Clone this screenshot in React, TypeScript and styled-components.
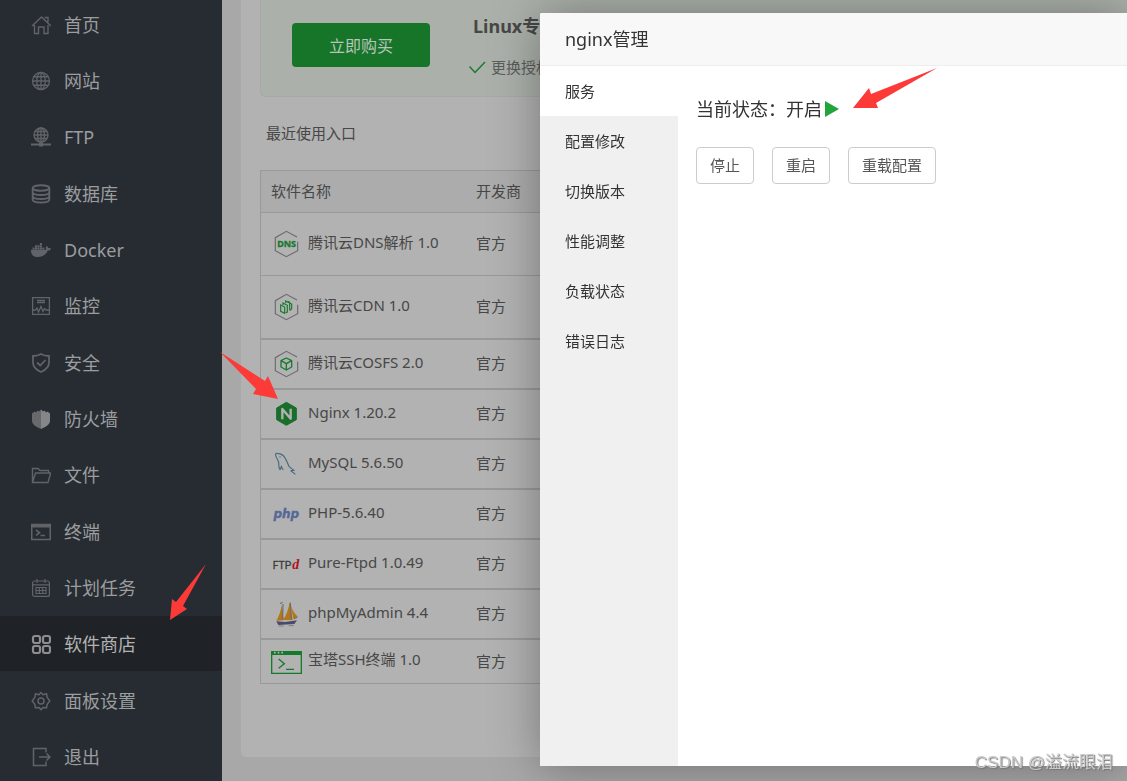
import React from 'react';
import styled, { createGlobalStyle, css } from 'styled-components';
import { FaDocker } from 'react-icons/fa';

const GlobalStyle = createGlobalStyle`
  *, *::before, *::after { box-sizing: border-box; }
  body {
    margin: 0;
    background: #a8a8a8;
    color: #474747;
    font: 15px/24px "Noto Sans", "Noto Sans CJK SC", sans-serif;
  }
  button { font: inherit; }
  ul { list-style: none; margin: 0; padding: 0; }
`;

const Page = styled.div`
  display: flex;
  min-height: 100vh;
  height: 100vh;
  overflow: hidden;
`;

const Sidebar = styled.nav`
  flex: none;
  width: 222px;
  overflow: hidden;
  background: #272c32;
`;

const Menu = styled.ul`
  margin-top: -3px;
`;

const MenuItem = styled.li`
  height: 55px;
  margin-bottom: 1px;
  &:nth-child(3n) { margin-bottom: 2px; }
`;

const MenuLink = styled.a<{ $active?: boolean }>`
  display: flex;
  align-items: center;
  gap: 13px;
  height: 100%;
  padding-left: 31px;
  font-size: 18px;
  text-decoration: none;
  color: ${(p) => (p.$active ? '#b2b2b2' : '#9b9d9f')};
  background: ${(p) => (p.$active ? '#1f2327' : 'transparent')};
  svg { color: ${(p) => (p.$active ? '#8c8e90' : '#606367')}; }
`;

const Main = styled.main`
  flex: 1;
  min-width: 960px;
  padding: 0 19px 24px;
`;

const Card = styled.section`
  height: 100%;
  padding: 0 19px;
  border-radius: 0 0 5px 5px;
  background: #b2b2b2;
`;

const Promo = styled.div`
  display: flex;
  gap: 39px;
  height: 97px;
  padding: 0 31px;
  border: 1px solid #a2aba7;
  border-top: 0;
  border-radius: 0 0 6px 6px;
  background: #abb1aa;
`;

const BuyButton = styled.button`
  width: 138px;
  height: 44px;
  margin-top: 23px;
  padding: 2px 0 0;
  border: 0;
  border-radius: 4px;
  background: #167529;
  color: #b9c4ba;
  font-size: 16px;
`;

const Plan = styled.div`
  padding-top: 14px;
  white-space: nowrap;
`;

const PlanTitle = styled.h2`
  margin: 0 0 17px;
  padding-left: 4px;
  font-size: 18px;
  line-height: 24px;
  font-weight: 700;
`;

const PlanFeature = styled.p`
  display: flex;
  align-items: center;
  gap: 5px;
  margin: 0;
  color: #5b5d5b;
`;

const Recent = styled.h3`
  margin: 24px 0 25px;
  padding-left: 6px;
  font-size: 15px;
  line-height: 24px;
  font-weight: 400;
`;

const Table = styled.table`
  width: 100%;
  table-layout: fixed;
  border: 1px solid #999;
  border-width: 1px 1px 0;
  border-spacing: 0;
  th, td { padding: 0 10px; text-align: left; font-weight: 400; border-bottom: 1px solid #999; }
  th { height: 42px; background: #acacac; }
  th, td:last-child { padding-bottom: 2px; }
  th:first-child { width: 205px; }
`;

const Row = styled.tr<{ $height: number; $thick?: boolean }>`
  td {
    height: ${(p) => p.$height}px;
    ${(p) => p.$thick && css`border-bottom-width: 2px;`}
  }
`;

const Software = styled.div`
  display: flex;
  align-items: center;
  gap: 6px;
  white-space: nowrap;
  svg { flex: none; }
`;

const SoftwareName = styled.span`
  padding-bottom: 5px;
`;

const Dialog = styled.section`
  position: fixed;
  top: 13px;
  right: 0;
  bottom: 15px;
  left: 540px;
  display: flex;
  flex-direction: column;
  border-radius: 2px 0 0 2px;
  background: #fff;
  color: #333;
  box-shadow: 1px 1px 50px rgba(0, 0, 0, 0.35);
`;

const DialogTitle = styled.h1`
  flex: none;
  height: 53px;
  margin: 0;
  padding-left: 25px;
  border-bottom: 1px solid #eee;
  border-radius: 2px 0 0 0;
  background: #f8f8f8;
  font-size: 18px;
  line-height: 52px;
  font-weight: 400;
`;

const DialogBody = styled.div`
  display: flex;
  flex: 1;
`;

const Tabs = styled.div`
  display: flex;
  flex-direction: column;
  flex: none;
  width: 138px;
  background: #f0f0f0;
`;

const Tab = styled.button<{ $active?: boolean }>`
  height: 50px;
  padding: 0 25px;
  border: 0;
  text-align: left;
  color: #333;
  background: ${(p) => (p.$active ? '#fff' : 'transparent')};
`;

const Panel = styled.div`
  flex: 1;
  padding: 29px 18px;
`;

const Status = styled.p`
  display: flex;
  align-items: center;
  gap: 3px;
  margin: 0 0 24px;
  font-size: 18px;
  line-height: 28px;
`;

const Actions = styled.div`
  display: flex;
  gap: 18px;
`;

const Action = styled.button`
  height: 37px;
  padding: 0 13px 2px;
  border: 1px solid #ccc;
  border-radius: 4px;
  background: #fff;
  color: #555;
`;

const Arrow = styled.svg<{ $x: number; $y: number }>`
  position: fixed;
  left: ${(p) => p.$x}px;
  top: ${(p) => p.$y}px;
  fill: #fc3a38;
`;

const Watermark = styled.span`
  position: fixed;
  right: 14px;
  bottom: 6px;
  color: #c9c9c9;
  font-family: "Liberation Sans", "Noto Sans CJK SC", sans-serif;
  font-size: 17px;
  text-shadow: 1px 1px 1px #777;
`;

const Glyph = ({ children, width = 1.4 }: { children: React.ReactNode; width?: number }) => (
  <svg width="20" height="20" viewBox="0 0 20 20" fill="none" stroke="currentColor" strokeWidth={width} aria-hidden="true">
    {children}
  </svg>
);

const globe = (cx: number, cy: number, r: number) => (
  <>
    <circle cx={cx} cy={cy} r={r} />
    <ellipse cx={cx} cy={cy} rx={r / 2} ry={r} />
    <path d={`M${cx} ${cy - r}v${2 * r}M${cx - r} ${cy}h${2 * r}M${cx - r + 1} ${cy - r / 2}h${2 * r - 2}M${cx - r + 1} ${cy + r / 2}h${2 * r - 2}`} />
  </>
);

const menu: { label: string; icon: React.ReactNode; active?: boolean }[] = [
  { label: '首页', icon: <Glyph><path d="M1 11l9.500-9L20 11M3.500 10v8.500h4V12h5.500v6.500h4V10M13.500 2.500h3.500V7" /></Glyph> },
  { label: '网站', icon: <Glyph width={1.3}>{globe(10, 10, 8.5)}</Glyph> },
  { label: 'FTP', icon: <Glyph width={1.4}>{globe(10, 8, 7)}<path d="M0 17.500h20" strokeWidth="2" /><path d="M8 17.500h4" strokeWidth="4" /></Glyph> },
  {
    label: '数据库',
    icon: (
      <Glyph width={1.9}>
        <ellipse cx="10" cy="4" rx="8.300" ry="2.800" />
        <path d="M1.700 4v11.500c0 4 16.600 4 16.600 0V4M1.700 8c0 4 16.600 4 16.600 0M1.700 12c0 4 16.600 4 16.600 0" />
      </Glyph>
    ),
  },
  { label: 'Docker', icon: <FaDocker size={20} aria-hidden="true" /> },
  { label: '监控', icon: <Glyph width={1.3}><path d="M1.600 1.600h16.800v16.800H1.600zM6 4.500h8M6 6.500h8M2 14h2.500l1.500-2 1.500 4 2.500-5.500 2 5 1.500-3 1.500 1.500H18" /></Glyph> },
  { label: '安全', icon: <Glyph width={1.8}><path d="M10 1c2.500 1.500 5 2 8 2v6.500c0 4.500-3.500 7.500-8 9.500-4.500-2-8-5-8-9.500V3c3 0 5.500-.5 8-2zM6 9.500l3.200 3L14.500 7" /></Glyph> },
  {
    label: '防火墙',
    icon: (
      <Glyph>
        <path d="M10 .5L8 2.500 6.500 1.500 5 3.500 3.500 2.500 1 4.500V12c0 3.500 5 6.500 9 8z" fill="#68696b" stroke="none" />
        <path d="M10 .5l2 2 1.500-1L15 3.500l1.500-1L19 4.500V12c0 3.500-5 6.500-9 8z" fill="#858687" stroke="none" />
      </Glyph>
    ),
  },
  { label: '文件', icon: <Glyph><path d="M1.500 17V3.500H7l2 2h8.500V8M1.500 17.500L4.500 8h15.200L17 17.500z" /></Glyph> },
  { label: '终端', icon: <Glyph width={1.6}><path d="M.7 2.500h18.600v15H.7z" /><path d="M1 4h18" strokeWidth="3" /><path d="M5 8l3.500 2.700L5 13.500M9.500 13.500H14" /></Glyph> },
  { label: '计划任务', icon: <Glyph width={1.2}><rect x="1.600" y="3" width="16.800" height="15.400" rx="2" /><path d="M2 6.800h16M6 1v4M14 1v4M4.500 9.500h11M4.500 12.500h11M4.500 15.500h11M5 9v7M8.300 9v7M11.700 9v7M15 9v7" /></Glyph> },
  {
    label: '软件商店',
    active: true,
    icon: (
      <Glyph width={2.2}>
        {[[2, 2], [12, 2], [2, 12], [12, 12]].map(([x, y]) => (
          <rect key={`${x}-${y}`} x={x} y={y} width="7" height="7" rx="2" />
        ))}
      </Glyph>
    ),
  },
  {
    label: '面板设置',
    icon: (
      <Glyph width={1.5}>
        <path d="M10 1.500l2 2.300 3.600-1 .6 3.600 2.600 3.600-2.600 3.200-.6 3.600-3.600-.4-2 2.400-2-2.400-3.600.4-.6-3.600L1.200 10l2.600-3.600.6-3.600 3.600 1z" strokeLinejoin="round" />
        <circle cx="10" cy="10" r="3" />
      </Glyph>
    ),
  },
  { label: '退出', icon: <Glyph width={1.5}><path d="M15 5.500V1.500H2.500v17H15v-4M8 10h11M15.500 6.500L19 10l-3.500 3.500" /></Glyph> },
];

const Logo = ({ children }: { children: React.ReactNode }) => (
  <svg width="31" height="30" viewBox="21 27 93 90" fill="none" aria-hidden="true">{children}</svg>
);

const Hexagon = ({ children }: { children: React.ReactNode }) => (
  <Logo>
    <path d="M99 51L67 34 34 53v39l33 18 34-18V65" stroke="#6c6c6c" strokeWidth="3.500" />
    {children}
  </Logo>
);

const software: { name: string; height: number; thick?: boolean; logo: React.ReactNode }[] = [
  {
    name: '腾讯云DNS解析 1.0',
    height: 63,
    logo: (
      <Hexagon>
        <text x="68" y="82" textAnchor="middle" fontFamily="Noto Sans, sans-serif" fontWeight="700" fontSize="27" fill="#1a7a2e" stroke="#1a7a2e">DNS</text>
      </Hexagon>
    ),
  },
  {
    name: '腾讯云CDN 1.0',
    height: 64,
    thick: true,
    logo: <Hexagon><path d="M50 66l12 6v19l-12-6zM57 66v-6l13 7v20l-5 2M65 60v-6l18 9v14l-6 6M71 55l6 3v22" stroke="#1a7a2e" strokeWidth="3.500" /></Hexagon>,
  },
  {
    name: '腾讯云COSFS 2.0',
    height: 50,
    thick: true,
    logo: <Hexagon><path d="M67 54l16 8v19l-16 9-16-9V62zM51 62l16 9 16-9M67 71v19" stroke="#1a7a2e" strokeWidth="4" strokeLinejoin="round" /></Hexagon>,
  },
  {
    name: 'Nginx 1.20.2',
    height: 50,
    thick: true,
    logo: (
      <Logo>
        <path d="M67 37l30 17v35L67 106 38 89V54z" fill="#1a6e2b" stroke="#1a6e2b" strokeWidth="3" strokeLinejoin="round" />
        <path d="M55 88V57l25 29V56" stroke="#b2b2b2" strokeWidth="7" strokeLinejoin="round" />
      </Logo>
    ),
  },
  {
    name: 'MySQL 5.6.50',
    height: 50,
    thick: true,
    logo: (
      <Logo>
        <path d="M58 89c-4-2-5-6-6-11-1 5-2 9-4 11-5-6-3-14-4-21-1-8-5-11-8-19-3-7-1-10 5-9 9 1 16 4 21 12 6 9 8 17 13 27 3 4 8 7 15 12-6 0-9 1-9 2 5 3 9 6 13 10" stroke="#456b7f" strokeWidth="3.500" strokeLinejoin="round" />
        <circle cx="48" cy="51" r="2" fill="#456b7f" />
      </Logo>
    ),
  },
  {
    name: 'PHP-5.6.40',
    height: 50,
    thick: true,
    logo: (
      <Logo>
        <text x="67" y="85" textAnchor="middle" fontFamily="DejaVu Sans, sans-serif" fontWeight="700" fontStyle="italic" fontSize="36" fill="#566896" stroke="#566896">php</text>
      </Logo>
    ),
  },
  {
    name: 'Pure-Ftpd 1.0.49',
    height: 50,
    thick: true,
    logo: (
      <Logo>
        <text x="26" y="88" fontFamily="Roboto, sans-serif" fontSize="31" fill="#3c3c3c" stroke="#3c3c3c">FTP</text>
        <text x="85" y="88" fontFamily="Liberation Serif, serif" fontStyle="italic" fontWeight="700" fontSize="42" fill="#b0141c">d</text>
      </Logo>
    ),
  },
  {
    name: 'phpMyAdmin 4.4',
    height: 50,
    thick: true,
    logo: (
      <Logo>
        <path d="M37 92c8-14 14-30 16-48l6 47zM57 90c10-14 17-34 20-54l9 54zM80 46c4 12 11 24 21 34l-13 6z" fill="#b0771c" />
        <path d="M48 40l8-2M57 42l-1 46M79 38l3 50M90 86l10-4" stroke="#66666c" strokeWidth="3" />
        <path d="M37 94l26 2 36-5-8 11-48 3z" fill="#4b4a6b" />
        <path d="M44 108h15M74 107h16" stroke="#7d7d86" strokeWidth="3" />
      </Logo>
    ),
  },
  {
    name: '宝塔SSH终端 1.0',
    height: 44,
    logo: (
      <Logo>
        <path d="M23 41h89v65H23z" stroke="#167a2b" strokeWidth="4" />
        <path d="M22 39h92v12H22z" fill="#167a2b" />
        <path d="M30 44h5M41 44h5M52 44h5" stroke="#b2b2b2" strokeWidth="5" />
        <path d="M44 63l17 14-17 14M66 94h24" stroke="#167a2b" strokeWidth="4" />
      </Logo>
    ),
  },
];

const tabs = ['服务', '配置修改', '切换版本', '性能调整', '负载状态', '错误日志'];
const actions = ['停止', '重启', '重载配置'];

export default function App() {
  return (
    <>
      <GlobalStyle />
      <Page>
        <Sidebar>
          <Menu>
            {menu.map((item) => (
              <MenuItem key={item.label}>
                <MenuLink href="#" $active={item.active}>
                  {item.icon}
                  {item.label}
                </MenuLink>
              </MenuItem>
            ))}
          </Menu>
        </Sidebar>
        <Main>
          <Card>
            <Promo>
              <BuyButton>立即购买</BuyButton>
              <Plan>
                <PlanTitle>Linux专业版</PlanTitle>
                <PlanFeature>
                  <svg width="17" height="14" viewBox="0 0 17 14" fill="none" stroke="#1a7a2e" strokeWidth="1.500" aria-hidden="true">
                    <path d="M.5 6.500l5.500 6L16 2" />
                  </svg>
                  更换授权
                </PlanFeature>
              </Plan>
            </Promo>
            <Recent>最近使用入口</Recent>
            <Table>
              <thead>
                <tr>
                  <th>软件名称</th>
                  <th>开发商</th>
                </tr>
              </thead>
              <tbody>
                {software.map((item) => (
                  <Row key={item.name} $height={item.height} $thick={item.thick}>
                    <td>
                      <Software>
                        {item.logo}
                        <SoftwareName>{item.name}</SoftwareName>
                      </Software>
                    </td>
                    <td>官方</td>
                  </Row>
                ))}
              </tbody>
            </Table>
          </Card>
        </Main>
      </Page>
      <Dialog role="dialog" aria-labelledby="dialog-title">
        <DialogTitle id="dialog-title">nginx管理</DialogTitle>
        <DialogBody>
          <Tabs role="tablist">
            {tabs.map((label, i) => (
              <Tab key={label} role="tab" aria-selected={i === 0} $active={i === 0}>{label}</Tab>
            ))}
          </Tabs>
          <Panel role="tabpanel">
            <Status>
              当前状态：开启
              <svg width="14" height="16" viewBox="0 0 14 16" fill="#20a53a" aria-hidden="true"><path d="M0 0l14 8-14 8z" /></svg>
            </Status>
            <Actions>
              {actions.map((label) => (
                <Action key={label}>{label}</Action>
              ))}
            </Actions>
          </Panel>
        </DialogBody>
      </Dialog>
      <Arrow $x={853} $y={68} width="85" height="41" viewBox="0 0 85 41" aria-hidden="true">
        <path d="M0 40L16 20l2 6L84 0 23 35l2 5z" />
      </Arrow>
      <Arrow $x={220} $y={352} width="59" height="48" viewBox="0 0 59 48" aria-hidden="true">
        <path d="M58 47L48 24l-3 5L0 0l36 37-3 5z" />
      </Arrow>
      <Arrow $x={170} $y={564} width="36" height="56" viewBox="0 0 36 56" aria-hidden="true">
        <path d="M0 56L2 35l4 3L36 0 13 42l4 3z" />
      </Arrow>
      <Watermark>CSDN @溢流眼泪</Watermark>
    </>
  );
}
